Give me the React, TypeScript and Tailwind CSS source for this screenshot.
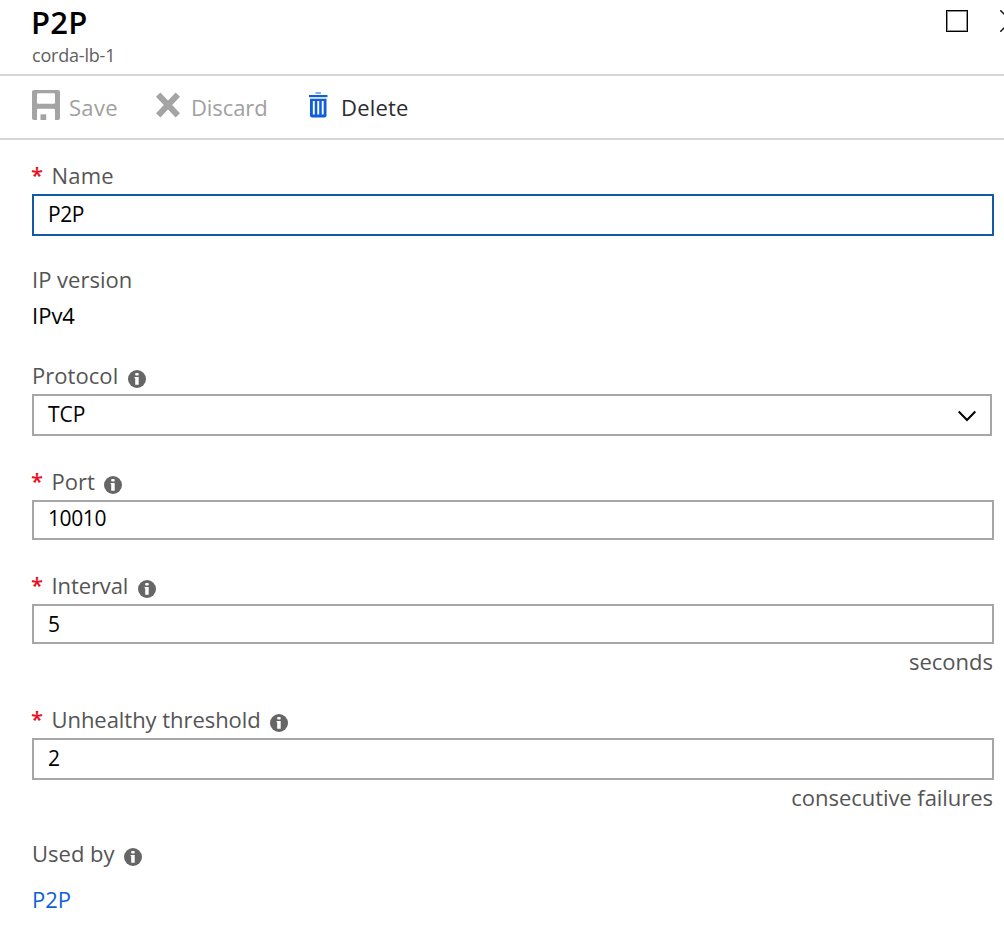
import type { ReactNode } from 'react';

function InfoIcon() {
  return (
    <svg className="mt-[10px] h-[18px] w-[18px] shrink-0" viewBox="0 0 18 18">
      <circle cx="9" cy="9" r="9" fill="#666" />
      <rect x="7.2" y="3" width="3.5" height="2.6" rx="0.8" fill="#fff" />
      <path d="M6.6 7h4.100v7.800H7.200V8.300h-.6z" fill="#fff" />
    </svg>
  );
}

function SaveIcon() {
  return (
    <svg className="h-[30px] w-[28px]" viewBox="0 0 28 30">
      <path
        fillRule="evenodd"
        fill="#a4a4a4"
        d="M2 0h24a2 2 0 0 1 2 2v26a2 2 0 0 1-2 2h-3V20a1.300 1.300 0 0 0-1.300-1.300H6.300A1.300 1.300 0 0 0 5 20v10H2a2 2 0 0 1-2-2V2a2 2 0 0 1 2-2zM6.300 3.300A1.300 1.300 0 0 0 5 4.600v7.800a1.300 1.300 0 0 0 1.300 1.300h15.400a1.300 1.300 0 0 0 1.300-1.300V4.600a1.300 1.300 0 0 0-1.300-1.300z"
      />
      <rect x="8.500" y="24.300" width="5.700" height="5.700" fill="#a4a4a4" />
    </svg>
  );
}

function DiscardIcon() {
  return (
    <svg className="h-[26px] w-[24px]" viewBox="0 0 24 26">
      <path d="M2.200 2.600L21.800 23.400M21.800 2.600L2.200 23.400" stroke="#a4a4a4" strokeWidth="6" />
    </svg>
  );
}

function TrashIcon() {
  return (
    <svg className="h-[26px] w-[19px]" viewBox="0 0 19 26">
      <path d="M6.500 1h5.500" stroke="#5c92e6" strokeWidth="1.500" />
      <path d="M0 3h18.500v2.200H0z" fill="#0f5fdc" />
      <path d="M1 6.700h16.500v16.800a2 2 0 0 1-2 2H3a2 2 0 0 1-2-2z" fill="#0f5fdc" />
      <path d="M4.800 9v13.500M9.250 9v13.500M13.700 9v13.500" stroke="#fff" strokeWidth="1.900" />
    </svg>
  );
}

function Label({ children, required, info }: { children: ReactNode; required?: boolean; info?: boolean }) {
  return (
    <div className="flex h-[30px] text-[22px] leading-[30px] text-[#555]">
      {required && <span className="-ml-px w-[20.500px] leading-[28px] font-semibold text-[#e81123]">*</span>}
      {children}
      {info && <InfoIcon />}
    </div>
  );
}

export default function App() {
  return (
    <div className="h-[926px] w-[1004px] overflow-hidden bg-white font-['Open_Sans','Noto_Sans',sans-serif] whitespace-nowrap">
      <header className="flex h-[76px] justify-between border-b-2 border-[#d6d6d6] pl-[31px]">
        <div className="pt-[2px]">
          <h1 className="h-10 text-[31px] leading-10 font-semibold tracking-[0.2px] text-black">P2P</h1>
          <p className="mt-px ml-px h-6 text-[18px] leading-[25px] tracking-[-0.2px] text-[#606060]">corda-lb-1</p>
        </div>
        <div className="flex gap-8 pt-[10px]">
          <div className="h-[22px] w-[22px] border border-black">
            <div className="h-full w-full border border-[#909090]" />
          </div>
          <svg className="h-[22px] w-1" viewBox="0 0 4 22">
            <path d="M0.300 0.300L11 11L0.300 21.700" fill="none" stroke="#111" strokeWidth="1.500" />
          </svg>
        </div>
      </header>

      <nav className="flex h-16 border-b-2 border-[#d6d6d6] pl-8 text-[22px] leading-[30px] text-[#a0a0a0]">
        <div className="flex w-[124px] gap-[9px] pt-[14px]">
          <SaveIcon />
          <span className="mt-[2px] tracking-[0.3px]">Save</span>
        </div>
        <div className="flex w-[153px] gap-[11px] pt-4">
          <DiscardIcon />
          <span className="tracking-[-0.1px]">Discard</span>
        </div>
        <div className="flex gap-[13px] pt-4">
          <TrashIcon />
          <span className="tracking-[0.2px] text-[#2c2c2c]">Delete</span>
        </div>
      </nav>

      <main className="pt-5 pr-[10px] pl-8">
        <Label required>
          <span className="tracking-[0.2px]">Name</span>
        </Label>
        <div className="mt-1 h-[42px] border-2 border-[#0f5ba7] pl-[14px] text-[21px] leading-[36px] text-black">
          <span className="tracking-[-0.4px]">P2P</span>
        </div>

        <div className="mt-7">
          <Label>IP version</Label>
          <div className="mt-[6px] h-[30px] text-[22px] leading-[30px] text-black">IPv4</div>
        </div>

        <div className="mt-[30px]">
          <Label info>
            <span className="w-[96px] tracking-[0.05px]">Protocol</span>
          </Label>
          <div className="mt-1 mr-[2px] flex h-[42px] justify-between border-2 border-[#a6a6a6] pr-[14px] pl-[14px] text-[21px] leading-[36px] text-black">
            <span>TCP</span>
            <svg className="mt-[14px] h-3 w-[18px]" viewBox="0 0 18 12">
              <path d="M0.700 1.500L9 10L17.300 1.500" fill="none" stroke="#000" strokeWidth="2" />
            </svg>
          </div>
        </div>

        <div className="mt-[30px]">
          <Label required info>
            <span className="w-[52.500px]">Port</span>
          </Label>
          <div className="mt-1 h-10 border-2 border-[#a6a6a6] pl-[14px] text-[21px] leading-[32px] tracking-[-0.4px] text-black">
            10010
          </div>
        </div>

        <div className="mt-[30px]">
          <Label required info>
            <span className="w-[86.500px] tracking-[-0.1px]">Interval</span>
          </Label>
          <div className="mt-1 h-10 border-2 border-[#a6a6a6] pl-[14px] text-[21px] leading-[36px] text-black">5</div>
          <div className="mt-[2px] h-[30px] pr-px text-right text-[22px] leading-[30px] text-[#555]">seconds</div>
        </div>

        <div className="mt-7">
          <Label required info>
            <span className="w-[218.500px] tracking-[-0.05px]">Unhealthy threshold</span>
          </Label>
          <div className="mt-1 h-[42px] border-2 border-[#a6a6a6] pl-[14px] text-[21px] leading-[36px] text-black">2</div>
          <div className="mt-[2px] h-[30px] pr-px text-right text-[22px] leading-[30px] tracking-[-0.05px] text-[#555]">
            consecutive failures
          </div>
        </div>

        <div className="mt-[26px]">
          <Label info>
            <span className="w-[92px]">Used by</span>
          </Label>
          <a className="mt-4 block h-[30px] text-[22px] leading-[30px] text-[#0f5fdc]">P2P</a>
        </div>
      </main>
    </div>
  );
}
